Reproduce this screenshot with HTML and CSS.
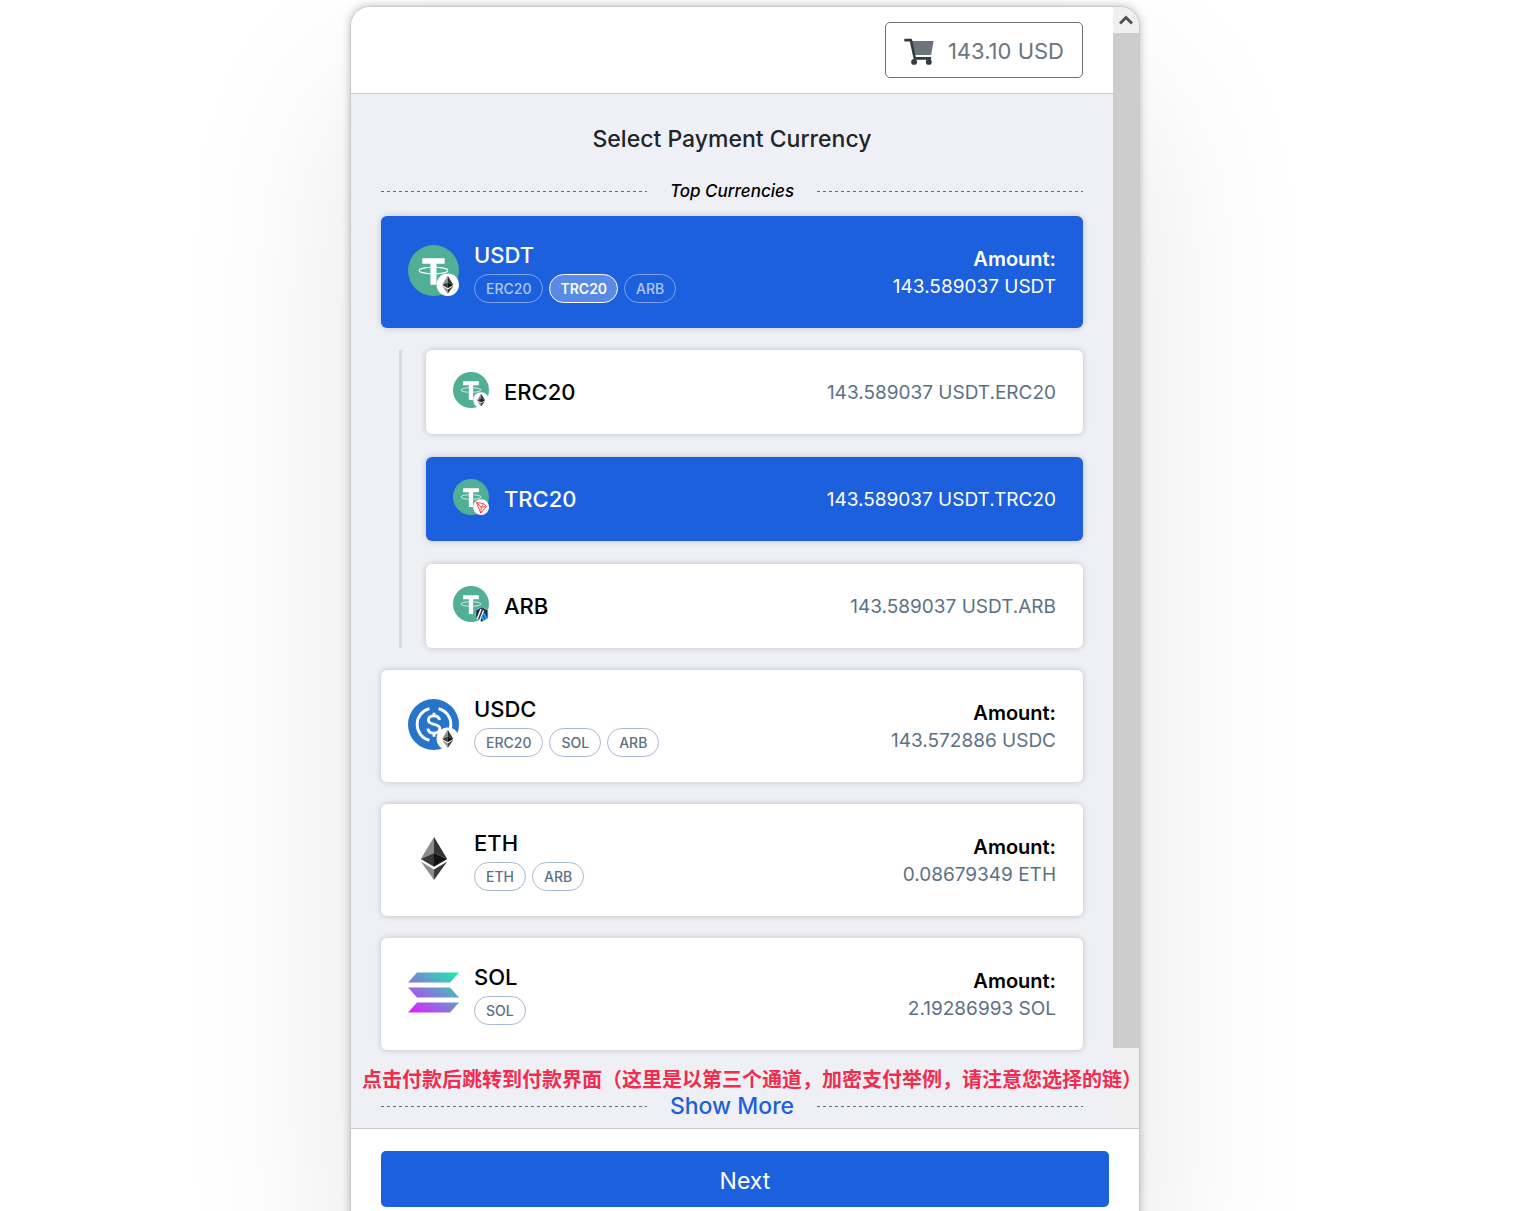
FILE: index.html
```
<!DOCTYPE html>
<html lang="en">
<head>
  <meta charset="UTF-8" />
  <meta name="viewport" content="width=device-width, initial-scale=1" />
  <title>Select Payment Currency</title>
  <link rel="stylesheet" href="styles.css">
</head>
<body>
  <!-- shared icon shapes -->
  <svg class="defs" width="0" height="0" aria-hidden="true">
    <symbol id="eth" viewBox="0 0 26 42">
      <path fill="#8c8c8c" d="M13 0 0 21.5 13 15.600z" />
      <path fill="#343434" d="M13 0v15.600l13 5.900z" />
      <path fill="#393939" d="M0 21.500 13 15.600v13.600z" />
      <path fill="#141414" d="M26 21.500 13 15.600v13.600z" />
      <path fill="#8c8c8c" d="M0 24l13 7.700V42z" />
      <path fill="#3c3c3b" d="M26 24l-13 7.700V42z" />
    </symbol>
    <symbol id="usdt" viewBox="0 0 50 50">
      <circle cx="25" cy="25" r="25" fill="#50af95" />
      <path fill="#fff" d="M14 13h22v5.500h-8V39h-6V18.500h-8z" />
      <ellipse cx="25" cy="25" rx="14" ry="3.200" fill="none" stroke="#fff" stroke-width="1" />
    </symbol>
    <symbol id="badge-eth" viewBox="0 0 50 50">
      <circle cx="39" cy="39" r="11" fill="#fff" />
      <use href="#eth" x="33.500" y="30" width="11" height="18" />
    </symbol>
  </svg>

  <div class="checkout">
    <div class="scroll-area">
      <div class="content">
        <header class="top">
          <button type="button" class="cart">
            <svg width="30" height="27" viewBox="0 0 92 82" aria-hidden="true">
              <path fill="#6c757d" d="M24 9h67l-8 43H33z" />
              <path fill="none" stroke="#343a40" stroke-width="8" stroke-linejoin="round" d="M1 6h20l12 56h50" />
              <circle cx="31" cy="73" r="9" fill="#343a40" />
              <circle cx="76" cy="73" r="9" fill="#343a40" />
            </svg>
            <span>143.10 USD</span>
          </button>
        </header>

        <main class="currencies">
          <h1>Select Payment Currency</h1>
          <div class="divider"><em>Top Currencies</em></div>

          <div class="list">
            <button type="button" class="card selected">
              <svg class="icon" viewBox="0 0 50 50" aria-hidden="true">
                <use href="#usdt" />
                <use href="#badge-eth" />
              </svg>
              <span class="info">
                <span class="name">USDT</span>
                <span class="chips">
                  <span class="chip">ERC20</span>
                  <span class="chip active">TRC20</span>
                  <span class="chip">ARB</span>
                </span>
              </span>
              <span class="amount"><b>Amount:</b>143.589037 USDT</span>
            </button>

            <div class="networks">
              <button type="button" class="card network">
                <svg class="icon" viewBox="0 0 50 50" aria-hidden="true">
                  <use href="#usdt" />
                  <use href="#badge-eth" />
                </svg>
                <span class="name">ERC20</span>
                <span class="amount">143.589037 USDT.ERC20</span>
              </button>

              <button type="button" class="card network selected">
                <svg class="icon" viewBox="0 0 50 50" aria-hidden="true">
                  <use href="#usdt" />
                  <circle cx="39" cy="39" r="11" fill="#fff" />
                  <path fill="none" stroke="#ff2b2b" stroke-width="1.200" stroke-linejoin="round" d="M32.500 32.500l10 1.800 4 4-8 9.200zM32.500 32.500l6.700 6.800 3.300-5M39.200 39.300l7.300-1M39.200 39.300l-.7 8.200" />
                </svg>
                <span class="name">TRC20</span>
                <span class="amount">143.589037 USDT.TRC20</span>
              </button>

              <button type="button" class="card network">
                <svg class="icon" viewBox="0 0 50 50" aria-hidden="true">
                  <use href="#usdt" />
                  <path fill="#213147" stroke="#9dcced" stroke-width="1" d="M40 29l8.500 4.800v10.500L40 49.500l-8.500-5.200V33.800z" />
                  <path stroke="#fff" stroke-width="2" d="M33.500 46l5.500-14M37 48l5.500-14" />
                  <path stroke="#12aaff" stroke-width="3" d="M42.500 38l4 7.500M40 42l2.500 5" />
                </svg>
                <span class="name">ARB</span>
                <span class="amount">143.589037 USDT.ARB</span>
              </button>
            </div>

            <button type="button" class="card">
              <svg class="icon" viewBox="0 0 50 50" aria-hidden="true">
                <circle cx="25" cy="25" r="25" fill="#2775ca" />
                <g fill="none" stroke="#fff" stroke-width="2.800">
                  <path d="M21 9.500a16 16 0 0 0 0 31M30 9.500a16 16 0 0 1 0 31" />
                  <path d="M31 20.500c-.5-2.700-2.500-4-5.500-4-3.200 0-5.500 1.600-5.500 4 0 6 11.200 2.600 11.200 8.500 0 2.700-2.300 4.500-5.700 4.500s-5.700-1.600-6-4.500M25.500 13.500v3.500M25.500 33v4" />
                </g>
                <use href="#badge-eth" />
              </svg>
              <span class="info">
                <span class="name">USDC</span>
                <span class="chips">
                  <span class="chip">ERC20</span>
                  <span class="chip">SOL</span>
                  <span class="chip">ARB</span>
                </span>
              </span>
              <span class="amount"><b>Amount:</b>143.572886 USDC</span>
            </button>

            <button type="button" class="card">
              <svg class="icon" viewBox="0 0 50 50" aria-hidden="true">
                <use href="#eth" x="12.500" y="4" width="26" height="42" />
              </svg>
              <span class="info">
                <span class="name">ETH</span>
                <span class="chips">
                  <span class="chip">ETH</span>
                  <span class="chip">ARB</span>
                </span>
              </span>
              <span class="amount"><b>Amount:</b>0.08679349 ETH</span>
            </button>

            <button type="button" class="card">
              <svg class="icon" viewBox="0 0 51 51" aria-hidden="true">
                <linearGradient id="sol" gradientUnits="userSpaceOnUse" x1="44" y1="1" x2="9" y2="50">
                  <stop offset="0" stop-color="#14f1a8" />
                  <stop offset="1" stop-color="#dc1fff" />
                </linearGradient>
                <path fill="url(#sol)" d="M9 5.500h42l-9 10H0zM0 20.500h42l9 10H9zM9 35.500h42l-9 10H0z" />
              </svg>
              <span class="info">
                <span class="name">SOL</span>
                <span class="chips">
                  <span class="chip">SOL</span>
                </span>
              </span>
              <span class="amount"><b>Amount:</b>2.19286993 SOL</span>
            </button>
          </div>

          <div class="divider more"><button type="button">Show More</button></div>
        </main>
      </div>

      <div class="scrollbar">
        <button type="button" aria-label="Scroll up">
          <svg width="14" height="12" viewBox="0 0 14 12" aria-hidden="true">
            <path fill="none" stroke="#505050" stroke-width="3" d="M1 9.500l6-6 6 6" />
          </svg>
        </button>
        <div class="thumb"></div>
      </div>
    </div>

    <p class="note" lang="zh">点击付款后跳转到付款界面（这里是以第三个通道，加密支付举例，请注意您选择的链）</p>

    <footer class="bottom">
      <button type="button" class="next">Next</button>
    </footer>
  </div>
</body>
</html>
```
FILE: styles.css
```
* {
  box-sizing: border-box;
}

body {
  margin: 0;
  padding: 6px 40px 0 0;
  background: #fff;
  color: #000;
  font-family: Inter, "Noto Sans CJK SC", sans-serif;
  overflow: hidden;
}

button {
  margin: 0;
  padding: 0;
  border: none;
  background: none;
  color: inherit;
  font: inherit;
  cursor: pointer;
}

.defs {
  position: absolute;
}

.checkout {
  position: relative;
  max-width: 790px;
  margin: 0 auto;
  border: 1px solid #c8c8c8;
  border-radius: 20px;
  background: #fff;
  box-shadow: 0 0 8px rgba(0, 0, 0, 0.25), 0 90px 180px rgba(0, 0, 0, 0.1);
}

.scroll-area {
  display: flex;
  border-radius: 19px 19px 0 0;
  overflow: hidden;
}

.content {
  flex: 1;
  min-width: 0;
  background: #eff0f6;
}

/* header */
.top {
  display: flex;
  justify-content: flex-end;
  padding: 15px 30px;
  background: #fff;
  border-bottom: 1px solid #c8c8c8;
}

.cart {
  display: flex;
  align-items: center;
  gap: 14px;
  height: 56px;
  padding: 2px 18px 0;
  border: 1px solid #6c757d;
  border-radius: 5px;
  color: #6c757d;
  font-size: 22px;
}

.currencies {
  padding: 30px 30px 7px;
}

h1 {
  margin: 0 0 24px;
  color: #212529;
  font-size: 23px;
  font-weight: 500;
  line-height: 30px;
  text-align: center;
}

.divider {
  display: flex;
  align-items: center;
  gap: 23px;
  margin-bottom: 12px;
  font-size: 17px;
  font-weight: 500;
  line-height: 26px;
}

.divider::before,
.divider::after {
  content: "";
  flex: 1;
  height: 1px;
  background: repeating-linear-gradient(90deg, #5a7184 0 3px, transparent 3px 6px);
}

.more {
  margin: 41px 0 0;
  color: #1d60de;
  font-size: 23px;
  line-height: 30px;
}

/* currency cards */
.list {
  display: flex;
  flex-direction: column;
  gap: 22px;
}

.card {
  display: flex;
  align-items: center;
  gap: 15px;
  width: 100%;
  min-height: 112px;
  padding: 0 27px;
  border-radius: 6px;
  background: #fff;
  text-align: left;
  box-shadow: 0 0 6px rgba(0, 0, 0, 0.2);
}

.icon {
  flex: none;
  width: 51px;
  height: 51px;
  margin-bottom: 4px;
}

.info {
  display: flex;
  flex-direction: column;
  gap: 4px;
  padding-bottom: 2px;
}

.name {
  font-size: 22px;
  font-weight: 500;
  line-height: 30px;
}

.chips {
  display: flex;
  gap: 6px;
}

.chip {
  padding: 1px 11px 0;
  border: 1px solid #a9b8d0;
  border-radius: 15px;
  color: #5a7184;
  font-size: 14px;
  font-weight: 500;
  line-height: 26px;
}

.amount {
  margin-left: auto;
  color: #5a7184;
  font-size: 19px;
  line-height: 27px;
  text-align: right;
}

.info + .amount {
  padding-top: 2px;
}

.amount b {
  display: block;
  color: #000;
  font-size: 20px;
  font-weight: 600;
}

.networks {
  display: flex;
  flex-direction: column;
  gap: 23px;
  margin-left: 18px;
  padding-left: 24px;
  border-left: 3px solid #d5dbe5;
}

.network {
  min-height: 84px;
}

.network .icon {
  width: 36px;
  height: 36px;
}

.selected {
  background: #1d60de;
  color: #fff;
}

.selected .amount,
.selected .amount b {
  color: #fff;
}

.selected .chip {
  border-color: #7ea4ed;
  color: #b0c8f5;
}

.selected .chip.active {
  padding: 1px 10px 0;
  border-color: #fff;
  background: #588ae6;
  color: #fff;
  font-weight: 600;
}

/* scrollbar column */
.scrollbar {
  display: flex;
  flex-direction: column;
  width: 26px;
  padding-bottom: 80px;
  background: #f0f0f0;
}

.scrollbar button {
  height: 26px;
}

.thumb {
  flex: 1;
  background: #cdcdcd;
}

/* lies over the list and the scrollbar */
.note {
  position: absolute;
  bottom: 136px;
  left: 11px;
  margin: 0;
  color: #f22c4e;
  font-family: "Noto Sans CJK SC", sans-serif;
  font-size: 20px;
  font-weight: 700;
  line-height: 28px;
  white-space: nowrap;
}

.bottom {
  padding: 22px 30px;
  border-top: 1px solid #c8c8c8;
}

.next {
  width: 100%;
  height: 56px;
  padding-top: 4px;
  border-radius: 5px;
  background: #1d60de;
  color: #fff;
  font-size: 23px;
}
```
